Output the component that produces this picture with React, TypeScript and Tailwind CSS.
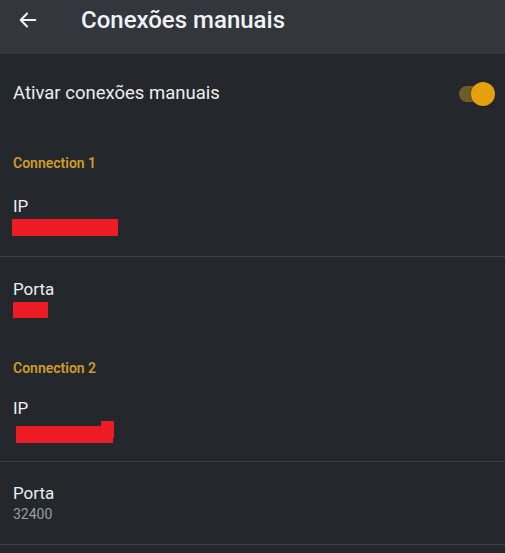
import { ReactElement } from 'react';

type FieldProps = {
  label: string;
  value?: string;
  redact?: ReactElement;
  divider?: boolean;
};

const Field = ({ label, value, redact, divider }: FieldProps): ReactElement => (
  <div className={`flex flex-col px-[13px] ${divider ? 'border-b border-[#3b3e45]' : ''}`}>
    <div className="h-[82px] flex flex-col justify-center">
      <p className="text-[17px] leading-[22px] text-[#eceef0]">{label}</p>
      {value && <p className="text-[14px] leading-[20px] text-[#9a9da3]">{value}</p>}
      {redact}
    </div>
  </div>
);

const SectionTitle = ({ title }: { title: string }): ReactElement => (
  <div className="h-[40px] pt-[19px] px-[13px]">
    <p className="text-[14px] leading-[20px] font-semibold text-[#d19b2a]">{title}</p>
  </div>
);

export default function App(): ReactElement {
  return (
    <div
      className="w-[505px] h-[553px] overflow-hidden bg-[#24272c]"
      style={{ fontFamily: 'Roboto, "Noto Sans", sans-serif' }}
    >
      <header className="h-[54px] bg-[#33363d] flex items-center pb-[14px]">
        <svg className="ml-[17px] w-[22px] h-[22px]" viewBox="0 0 24 24" fill="none" stroke="#f2f3f4" strokeWidth="2.2" strokeLinecap="round" strokeLinejoin="round">
          <path d="M20 12H4M11 5l-7 7 7 7" />
        </svg>
        <h1 className="ml-[42px] text-[24px] leading-[30px] font-medium text-[#f2f3f4]">Conexões manuais</h1>
      </header>

      <div className="h-[80px] flex items-center justify-between pl-[13px] pr-[10px]">
        <p className="text-[18.5px] text-[#eceef0]">Ativar conexões manuais</p>
        <div className="relative w-[36px] h-[24px] flex items-center">
          <div className="w-[32px] h-[16px] rounded-full bg-[#6e5b2a]" />
          <div className="absolute right-0 top-0 w-[24px] h-[24px] rounded-full bg-[#e5a00d] shadow" />
        </div>
      </div>

      <SectionTitle title="Connection 1" />
      <Field
        label="IP"
        divider
        redact={<div className="mt-[2px] -ml-[1px] w-[106px] h-[17px] bg-[#ed1c24]" />}
      />
      <Field
        label="Porta"
        redact={<div className="mt-[2px] w-[35px] h-[16px] bg-[#ed1c24]" />}
      />

      <SectionTitle title="Connection 2" />
      <Field
        label="IP"
        divider
        redact={
          <div className="relative mt-[2px] ml-[3px] w-[98px] h-[22px]">
            <div className="absolute left-0 bottom-0 w-[97px] h-[17px] bg-[#ed1c24]" />
            <div className="absolute right-0 top-0 w-[13px] h-[17px] bg-[#ed1c24]" />
          </div>
        }
      />
      <Field label="Porta" value="32400" divider />
    </div>
  );
}
